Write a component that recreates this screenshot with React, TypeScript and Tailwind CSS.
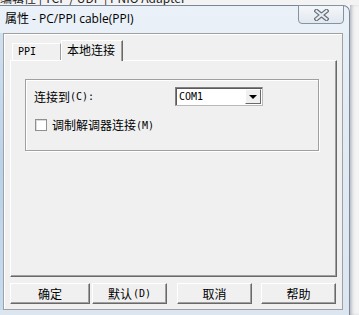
const cjk = "font-['Noto_Sans_CJK_SC',sans-serif]";
const mono = "font-['DejaVu_Sans_Mono',monospace]";

function CloseGlyph() {
  return (
    <svg width="15" height="12" viewBox="0 0 15 12">
      <path
        d="M2.5 2 L12.5 10 M12.5 2 L2.5 10"
        stroke="#66717d"
        strokeWidth="4.4"
        strokeLinecap="square"
      />
      <path
        d="M2.5 2 L12.5 10 M12.5 2 L2.5 10"
        stroke="#e9edf1"
        strokeWidth="2"
        strokeLinecap="square"
      />
    </svg>
  );
}

function Button({ w, label, hot }: { w: string; label: string; hot?: string }) {
  return (
    <div
      className={`${w} h-[21px] flex items-center justify-center border border-t-white border-l-white border-r-[#696969] border-b-[#696969] shadow-[inset_-1px_-1px_0_#a0a0a0] bg-[#f0f0f0] text-[12px] text-black ${cjk}`}
    >
      <span>{label}</span>
      {hot && <span className={`${mono} text-[10px] ml-[1px]`}>{hot}</span>}
    </div>
  );
}

export default function App() {
  return (
    <div className="w-[359px] h-[315px] overflow-hidden bg-[#f5f5f5] flex flex-col">
      {/* background window, only its lower edge shows */}
      <div className="h-[5px] overflow-hidden bg-[#f3f3f3]">
        <div className={`-mt-[9px] whitespace-nowrap text-[12px] leading-[14px] text-[#222] ${cjk}`}>
          编辑性 | TCP / UDP | PNIO Adapter
        </div>
      </div>

      <div className="flex h-[310px]">
        <div className="w-[350px] h-[310px] rounded-tr-[7px] border-t border-r border-[#7a8796] bg-gradient-to-b from-[#eaf1f8] to-[#dde8f3] flex flex-col">
          {/* title bar */}
          <div className="h-[27px] flex items-start">
            <div className={`pl-[5px] pt-[5px] text-[12px] leading-[16px] text-black font-['Open_Sans','Noto_Sans_CJK_SC',sans-serif]`}>
              属性 - PC/PPI cable(PPI)
            </div>
            <div className="ml-auto mr-[5px] -mt-[1px] w-[46px] h-[19px] rounded-b-[4px] border border-[#8693a1] bg-gradient-to-b from-[#f4f7fa] to-[#e2e8ef] flex items-center justify-center">
              <CloseGlyph />
            </div>
          </div>

          <div className="flex h-[277px]">
            <div className="w-[3px] bg-gradient-to-b from-[#cfe0f1] via-[#b9d2ea] to-[#c8dcef]" />
            {/* client area */}
            <div className="w-[340px] h-[277px] bg-[#f0f0f0] border border-[#a0a0a0] shadow-[inset_1px_1px_0_#ffffff] flex flex-col pt-[6px] pl-[6px] pr-[5px]">
              {/* tabs */}
              <div className="h-[20px] flex items-end">
                <div className={`w-[49px] h-[17px] ml-[2px] border-t border-l border-white border-r border-r-[#a0a0a0] pl-[5px] text-[10px] leading-[16px] text-black ${mono}`}>
                  PPI
                </div>
                <div className={`relative z-10 w-[62px] h-[21px] -mb-[1px] bg-[#f0f0f0] border-t border-l border-white border-r border-r-[#696969] shadow-[inset_-1px_0_0_#a0a0a0] pl-[5px] text-[12px] leading-[18px] text-black ${cjk}`}>
                  本地连接
                </div>
              </div>
              {/* tab page */}
              <div className="h-[217px] border border-t-white border-l-white border-r-[#696969] border-b-[#696969] shadow-[inset_-1px_-1px_0_#a0a0a0] pt-[18px] pl-[14px]">
                <div className="w-[294px] h-[72px] border border-[#a0a0a0] shadow-[inset_1px_1px_0_#ffffff,1px_1px_0_#ffffff] pl-[8px] pt-[7px] flex flex-col">
                  <div className="h-[19px] flex items-center">
                    <div className={`w-[141px] flex items-center text-[12px] text-black ${cjk}`}>
                      <span>连接到</span>
                      <span className={`${mono} text-[10px]`}>(C):</span>
                    </div>
                    <div className="w-[88px] h-[19px] bg-white border border-t-[#828282] border-l-[#828282] border-r-[#b9b9b9] border-b-[#b9b9b9] shadow-[inset_1px_1px_0_#5a5a5a] flex items-center">
                      <span className={`pl-[3px] text-[10px] text-black ${mono}`}>COM1</span>
                      <div className="ml-auto mr-[1px] w-[16px] h-[15px] bg-[#f0f0f0] border border-t-white border-l-white border-r-[#696969] border-b-[#696969] flex items-center justify-center">
                        <div className="w-0 h-0 border-l-[4px] border-r-[4px] border-t-[4px] border-l-transparent border-r-transparent border-t-black" />
                      </div>
                    </div>
                  </div>
                  <div className="mt-[10px] flex items-center">
                    <div className="ml-[1px] w-[12px] h-[12px] bg-white border border-[#8e8f8f] shadow-[inset_1px_1px_0_#dcdcdc]" />
                    <span className={`ml-[5px] text-[12px] text-black ${cjk}`}>调制解调器连接</span>
                    <span className={`${mono} text-[10px] text-black`}>(M)</span>
                  </div>
                </div>
              </div>
              {/* buttons */}
              <div className="mt-[6px] flex">
                <Button w="w-[80px]" label="确定" />
                <div className="w-[2px]" />
                <Button w="w-[75px]" label="默认" hot="(D)" />
                <div className="w-[10px]" />
                <Button w="w-[75px]" label="取消" />
                <div className="w-[9px]" />
                <Button w="w-[75px]" label="帮助" />
              </div>
            </div>
            <div className="flex-1 bg-gradient-to-b from-[#e6eef6] to-[#dbe6f1]" />
          </div>
          <div className="flex-1 bg-[#dbe6f1]" />
        </div>
        <div className="flex-1 bg-[#f4f4f4] shadow-[inset_3px_0_4px_-2px_#9aa3ad]" />
      </div>
    </div>
  );
}
